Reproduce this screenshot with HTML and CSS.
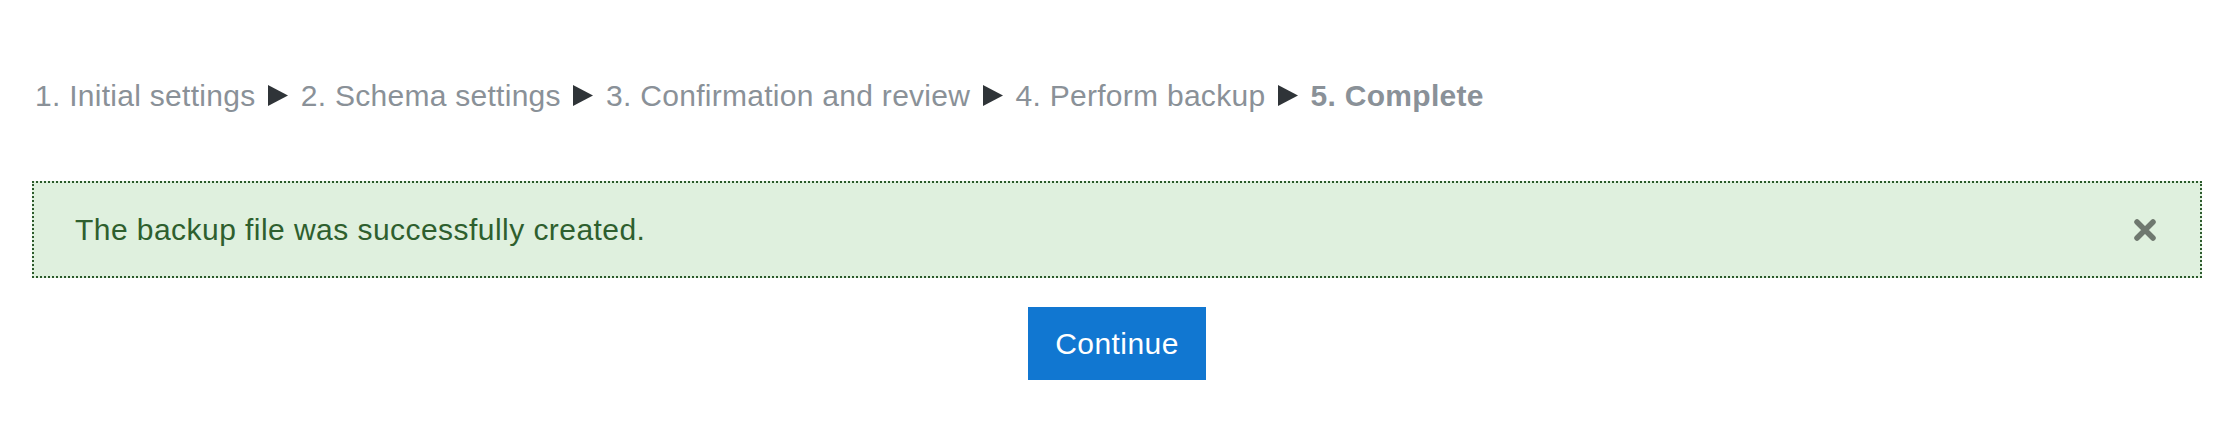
FILE: index.html
```html
<!DOCTYPE html>
<html lang="en">
<head>
<meta charset="utf-8">
<title>Backup complete</title>
<link rel="stylesheet" href="styles.css">
</head>
<body>
<div class="page">
  <nav class="steps">
    <span class="step">1. Initial settings</span>
    <svg class="sep" viewBox="0 0 20 21" aria-hidden="true"><polygon points="0,0 20,10.5 0,21"/></svg>
    <span class="step">2. Schema settings</span>
    <svg class="sep" viewBox="0 0 20 21" aria-hidden="true"><polygon points="0,0 20,10.5 0,21"/></svg>
    <span class="step">3. Confirmation and review</span>
    <svg class="sep" viewBox="0 0 20 21" aria-hidden="true"><polygon points="0,0 20,10.5 0,21"/></svg>
    <span class="step">4. Perform backup</span>
    <svg class="sep" viewBox="0 0 20 21" aria-hidden="true"><polygon points="0,0 20,10.5 0,21"/></svg>
    <strong class="step current">5. Complete</strong>
  </nav>
  <div class="alert" role="alert">
    <span class="alert-text">The backup file was successfully created.</span>
    <button class="close" type="button" aria-label="Dismiss this notification">
      <svg viewBox="0 0 24 24" aria-hidden="true"><path d="M4 4 L20 20 M20 4 L4 20"/></svg>
    </button>
  </div>
  <div class="actions">
    <button class="btn-primary" type="button">Continue</button>
  </div>
</div>
</body>
</html>
```
FILE: styles.css
```css
html, body {
  margin: 0;
  padding: 0;
  background: #ffffff;
}
body {
  font-family: "Liberation Sans", Arial, sans-serif;
  font-size: 30px;
  line-height: 45px;
  letter-spacing: 0.45px;
}
.page {
  padding: 73px 36px 0 32px;
}
.steps {
  color: #8a9198;
  padding-left: 3px;
  white-space: nowrap;
  letter-spacing: 0.28px;
}
.step.current {
  font-weight: bold;
}
.sep {
  width: 20px;
  height: 21px;
  margin: 0 4px;
  vertical-align: baseline;
  fill: #2f3438;
}
.alert {
  margin-top: 63px;
  display: flex;
  align-items: center;
  justify-content: space-between;
  padding: 24px 43px 24px 41px;
  background: #dff0de;
  color: #2e5f2e;
  border: 2px dotted #2b5a2b;
}
.close {
  border: 0;
  background: none;
  padding: 0;
  margin: 0;
  width: 24px;
  height: 24px;
  display: flex;
  cursor: pointer;
}
.close svg {
  width: 24px;
  height: 24px;
  stroke: #000000;
  stroke-opacity: 0.5;
  stroke-width: 5.5;
  stroke-linecap: round;
  fill: none;
}
.actions {
  display: flex;
  justify-content: center;
  margin-top: 29px;
}
.btn-primary {
  font-family: "Liberation Sans", Arial, sans-serif;
  font-size: 30px;
  line-height: 45px;
  letter-spacing: 0.45px;
  color: #ffffff;
  background: #1177d1;
  border: 2px solid #1177d1;
  border-radius: 0;
  padding: 12px 25px;
  cursor: pointer;
}
```
